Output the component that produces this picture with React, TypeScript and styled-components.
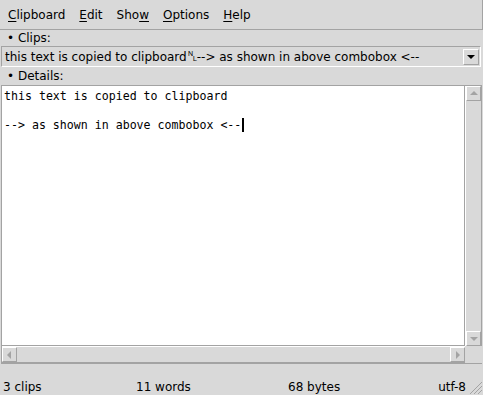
import React from 'react';
import styled, { createGlobalStyle } from 'styled-components';

const GlobalStyle = createGlobalStyle`
  html, body {
    margin: 0;
    padding: 0;
    background: #d9d9d9;
  }
  body {
    font-family: 'DejaVu Sans', sans-serif;
    font-size: 12px;
    color: #000;
  }
`;

const Window = styled.div`
  width: 483px;
  height: 395px;
  display: flex;
  flex-direction: column;
  background: #d9d9d9;
  overflow: hidden;
`;

const MenuBar = styled.div`
  height: 29px;
  display: flex;
  align-items: center;
  padding-left: 1px;
  border-bottom: 1px solid #a3a3a3;
  border-right: 1px solid #a3a3a3;
  box-sizing: content-box;
`;

const MenuItem = styled.span`
  padding: 1px 7px 0;
  u {
    text-decoration: underline;
    text-underline-offset: 2px;
  }
`;

const SectionLabel = styled.div<{ $height: number }>`
  height: ${(p) => p.$height}px;
  display: flex;
  align-items: center;
  padding-left: 7px;
  white-space: pre;
`;

const Combo = styled.div`
  height: 19px;
  margin: 0 2px 0 1px;
  display: flex;
  align-items: center;
  border-top: 1px solid #a3a3a3;
  border-left: 1px solid #a3a3a3;
  border-bottom: 1px solid #fff;
  border-right: 1px solid #fff;
  background: #d9d9d9;
`;

const ComboText = styled.div`
  flex: 1;
  padding-left: 3px;
  line-height: 17px;
  white-space: pre;
  overflow: hidden;
`;

const NewlineMark = styled.span`
  font-size: 14px;
  letter-spacing: -1px;
`;

const ArrowButton = styled.div`
  width: 16px;
  height: 16px;
  margin-right: 1px;
  box-sizing: border-box;
  border-top: 1px solid #fff;
  border-left: 1px solid #fff;
  border-bottom: 1px solid #a3a3a3;
  border-right: 1px solid #a3a3a3;
  display: flex;
  align-items: center;
  justify-content: center;
`;

const TextFrame = styled.div`
  height: 277px;
  margin: 0 1px;
  display: grid;
  grid-template-columns: 1fr 17px;
  grid-template-rows: 1fr 17px;
  border: 1px solid #a3a3a3;
  border-right: none;
`;

const TextArea = styled.div`
  background: #fff;
  border-right: 1px solid #a3a3a3;
  border-bottom: 1px solid #a3a3a3;
  padding: 3px 0 0 2px;
  font-family: 'DejaVu Sans Mono', monospace;
  font-size: 11.6px;
  line-height: 14.5px;
  white-space: pre;
`;

const Caret = styled.span`
  display: inline-block;
  width: 2px;
  height: 14px;
  background: #000;
  vertical-align: -3px;
  margin-left: 1px;
`;

const VScroll = styled.div`
  display: flex;
  flex-direction: column;
  justify-content: space-between;
  border-left: 1px solid #fff;
  border-right: 1px solid #a3a3a3;
  background: #d9d9d9;
`;

const HScroll = styled.div`
  display: flex;
  justify-content: space-between;
  border-top: 1px solid #fff;
  border-bottom: 1px solid #a3a3a3;
  background: #d9d9d9;
`;

const ScrollArrow = styled.div`
  width: 15px;
  height: 15px;
  box-sizing: border-box;
  border-top: 1px solid #fff;
  border-left: 1px solid #fff;
  border-bottom: 1px solid #a3a3a3;
  border-right: 1px solid #a3a3a3;
  display: flex;
  align-items: center;
  justify-content: center;
`;

const Corner = styled.div`
  background: #d9d9d9;
`;

const StatusBar = styled.div`
  flex: 1;
  display: grid;
  grid-template-columns: 133px 152px 1fr auto;
  align-items: end;
  padding: 0 2px 1px 3px;
  position: relative;
`;

const StatusCell = styled.span<{ $right?: boolean }>`
  text-align: ${(p) => (p.$right ? 'right' : 'left')};
  padding-right: ${(p) => (p.$right ? '15px' : '0')};
`;

const Grip = styled.svg`
  position: absolute;
  right: 0;
  bottom: 0;
`;

const Tri = ({ dir, color = '#a3a3a3' }: { dir: 'up' | 'down' | 'left' | 'right'; color?: string }) => {
  const pts = {
    up: '1,6 5,2 9,6',
    down: '1,3 9,3 5,7',
    left: '6,1 6,9 2,5',
    right: '3,1 3,9 7,5',
  }[dir];
  return (
    <svg width="10" height="10" viewBox="0 0 10 10">
      <polygon points={pts} fill={color} />
    </svg>
  );
};

export default function App() {
  return (
    <Window>
      <GlobalStyle />
      <MenuBar>
        <MenuItem><u>C</u>lipboard</MenuItem>
        <MenuItem><u>E</u>dit</MenuItem>
        <MenuItem>Sho<u>w</u></MenuItem>
        <MenuItem><u>O</u>ptions</MenuItem>
        <MenuItem><u>H</u>elp</MenuItem>
      </MenuBar>
      <SectionLabel $height={16}>• Clips:</SectionLabel>
      <Combo>
        <ComboText>
          this text is copied to clipboard<NewlineMark>␤</NewlineMark>--&gt; as shown in above combobox &lt;--
        </ComboText>
        <ArrowButton>
          <Tri dir="down" color="#000" />
        </ArrowButton>
      </Combo>
      <SectionLabel $height={18}>• Details:</SectionLabel>
      <TextFrame>
        <TextArea>
          {'this text is copied to clipboard\n\n--> as shown in above combobox <--'}
          <Caret />
        </TextArea>
        <VScroll>
          <ScrollArrow><Tri dir="up" /></ScrollArrow>
          <ScrollArrow><Tri dir="down" /></ScrollArrow>
        </VScroll>
        <HScroll>
          <ScrollArrow><Tri dir="left" /></ScrollArrow>
          <ScrollArrow><Tri dir="right" /></ScrollArrow>
        </HScroll>
        <Corner />
      </TextFrame>
      <StatusBar>
        <StatusCell>3 clips</StatusCell>
        <StatusCell>11 words</StatusCell>
        <StatusCell>68 bytes</StatusCell>
        <StatusCell $right>utf-8</StatusCell>
        <Grip width="15" height="15" viewBox="0 0 15 15">
          <path d="M14 2 L2 14 M14 6 L6 14 M14 10 L10 14" stroke="#a3a3a3" strokeWidth="1" />
        </Grip>
      </StatusBar>
    </Window>
  );
}
